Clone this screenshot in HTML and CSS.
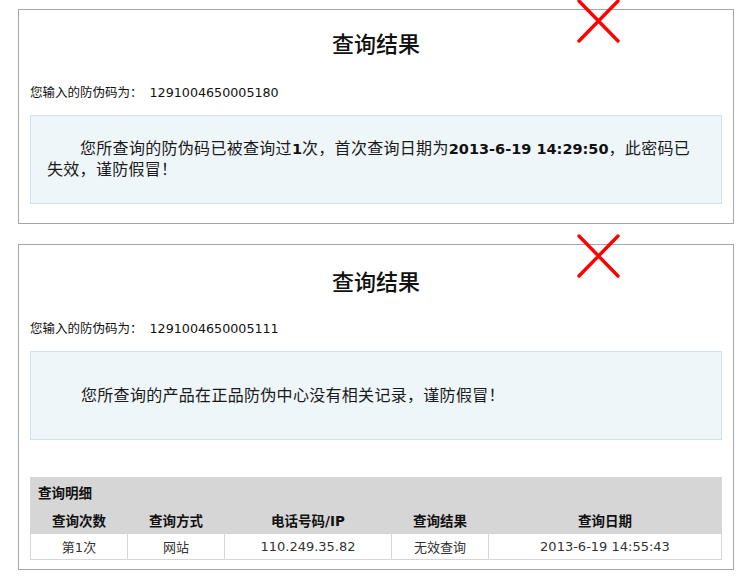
FILE: index.html
```html
<!DOCTYPE html>
<html lang="zh-CN">
<head>
<meta charset="utf-8">
<title>查询结果</title>
<link rel="stylesheet" href="styles.css">
</head>
<body>
<div class="page">
  <section class="panel panel-first">
    <svg class="mark" width="44" height="44" viewBox="0 0 44 44" aria-hidden="true">
      <path d="M2 2 L41 42 M41 2 L2 42" stroke="#ff0000" stroke-width="3.4" stroke-linecap="round" fill="none"/>
    </svg>
    <h1 class="title">查询结果</h1>
    <p class="code-row">您输入的防伪码为：<span class="code">1291004650005180</span></p>
    <div class="notice">
      <p class="notice-text">您所查询的防伪码已被查询过<span class="num">1</span>次，首次查询日期为<span class="num">2013-6-19 14:29:50</span>，此密码已失效，谨防假冒！</p>
    </div>
  </section>

  <section class="panel panel-second">
    <svg class="mark" width="44" height="44" viewBox="0 0 44 44" aria-hidden="true">
      <path d="M2 2 L41 42 M41 2 L2 42" stroke="#ff0000" stroke-width="3.4" stroke-linecap="round" fill="none"/>
    </svg>
    <h1 class="title">查询结果</h1>
    <p class="code-row">您输入的防伪码为：<span class="code">1291004650005111</span></p>
    <div class="notice">
      <p class="notice-text">您所查询的产品在正品防伪中心没有相关记录，谨防假冒！</p>
    </div>
    <table class="detail">
      <colgroup>
        <col class="c1"><col class="c2"><col class="c3"><col class="c4"><col class="c5">
      </colgroup>
      <tr class="cap-row"><td colspan="5" class="cap">查询明细</td></tr>
      <tr class="head-row">
        <th>查询次数</th><th>查询方式</th><th>电话号码/IP</th><th>查询结果</th><th>查询日期</th>
      </tr>
      <tr class="data-row">
        <td>第1次</td><td>网站</td><td>110.249.35.82</td><td>无效查询</td><td>2013-6-19 14:55:43</td>
      </tr>
    </table>
  </section>
</div>
</body>
</html>
```

FILE: styles.css
```css
html, body {
  margin: 0;
  padding: 0;
  background: #ffffff;
}

body {
  font-family: "DejaVu Sans", "Noto Sans CJK SC", sans-serif;
  color: #222;
}

.page {
  padding: 9px 0 0 18px;
  display: flex;
  flex-direction: column;
  gap: 20px;
  align-items: flex-start;
}

.panel {
  position: relative;
  box-sizing: border-box;
  width: 716px;
  border: 1px solid #a6a6a6;
  padding: 20px 11px 9px 11px;
  background: #fff;
}

.panel-first {
  padding-top: 17px;
  padding-bottom: 19px;
}

.panel-first .code-row {
  margin-top: 26px;
}

.mark {
  position: absolute;
  left: 558px;
  top: -11px;
}

.title {
  margin: 0;
  font-family: "Noto Sans CJK SC", sans-serif;
  font-size: 22px;
  line-height: 30px;
  font-weight: 500;
  text-align: center;
  color: #111;
}

.code-row {
  margin: 24px 0 0 0;
  font-size: 12.5px;
  line-height: 20px;
  color: #111;
}

.code {
  margin-left: 7px;
  font-size: 12.7px;
}

.notice {
  margin-top: 12px;
  box-sizing: border-box;
  min-height: 89px;
  padding: 21px 30px 22px 16px;
  background: #eff6fa;
  border: 1px solid #cfe3ec;
  display: flex;
  align-items: center;
}

.notice-text {
  margin: 0;
  font-size: 16px;
  line-height: 21px;
  text-indent: 33px;
  letter-spacing: 0.3px;
  color: #1a1a1a;
}

.num {
  font-size: 14.5px;
  line-height: 16px;
  font-weight: bold;
  letter-spacing: 0;
  color: #111;
}

.panel-second .notice-text {
  text-indent: 34px;
}

.detail {
  margin-top: 37px;
  width: 692px;
  border-collapse: separate;
  border-spacing: 1px;
  background: #d6d6d6;
  table-layout: fixed;
  font-size: 13px;
}

.c1 { width: 96px; }
.c2 { width: 96px; }
.c3 { width: 166px; }
.c4 { width: 96px; }

.cap {
  height: 27px;
  padding: 0 0 0 7px;
  text-align: left;
  font-weight: bold;
  font-size: 13.5px;
  color: #111;
  vertical-align: middle;
}

.head-row th {
  height: 27px;
  padding: 0;
  font-size: 13.5px;
  font-weight: bold;
  color: #111;
  text-align: center;
  vertical-align: middle;
}

.data-row td {
  height: 25px;
  padding: 0;
  background: #fff;
  text-align: center;
  vertical-align: middle;
  color: #333;
}
```
